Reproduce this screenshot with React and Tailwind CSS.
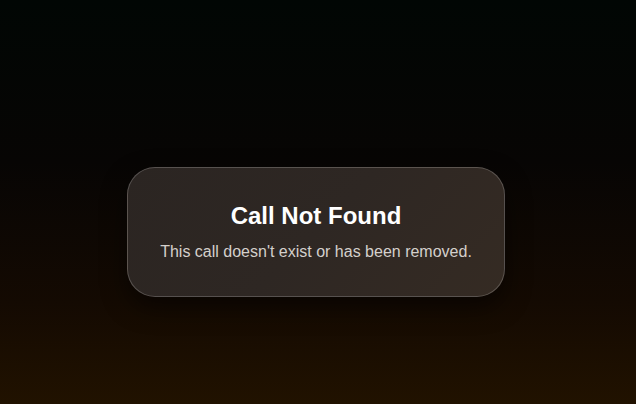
import React from 'react';

export default function App() {
    return (
        <div className="min-h-screen w-full bg-[linear-gradient(to_bottom,#010604_0%,#070504_40%,#140a02_75%,#211200_100%)] flex justify-center pt-[167px] font-['Liberation_Sans',Arial,sans-serif]">
            <div className="w-[378px] h-[130px] mr-[4px] rounded-[28px] border border-white/20 bg-[linear-gradient(135deg,#2b2522_0%,#2e2723_50%,#352b23_100%)] shadow-[0_10px_25px_rgba(0,0,0,0.5)] px-8 py-8 text-center">
                <h1 className="text-2xl font-bold text-white leading-8 mb-2">Call Not Found</h1>
                <p className="text-base leading-6 text-[#d4d0cc]">This call doesn't exist or has been removed.</p>
            </div>
        </div>
    );
}
